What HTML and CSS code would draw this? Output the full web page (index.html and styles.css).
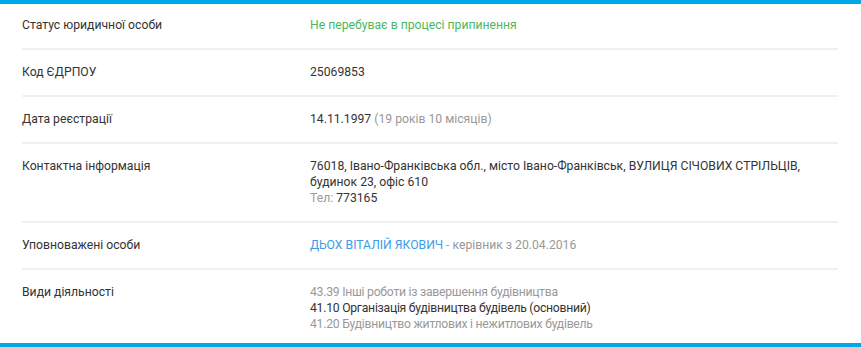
FILE: index.html
```html
<!DOCTYPE html>
<html lang="uk">
<head>
<meta charset="utf-8">
<link rel="stylesheet" href="styles.css">
</head>
<body>
<div class="panel">
  <div class="table">
    <div class="row row-first">
      <div class="label">Статус юридичної особи</div>
      <div class="value status">Не перебуває в процесі припинення</div>
    </div>
    <div class="row">
      <div class="label">Код ЄДРПОУ</div>
      <div class="value">25069853</div>
    </div>
    <div class="row">
      <div class="label">Дата реєстрації</div>
      <div class="value">14.11.1997 <span class="muted">(19 років 10 місяців)</span></div>
    </div>
    <div class="row">
      <div class="label">Контактна інформація</div>
      <div class="value">76018, Івано-Франківська обл., місто Івано-Франківськ, ВУЛИЦЯ СІЧОВИХ СТРІЛЬЦІВ,<br>будинок 23, офіс 610<br><span class="muted">Тел:</span> 773165</div>
    </div>
    <div class="row">
      <div class="label">Уповноважені особи</div>
      <div class="value"><a class="link" href="#">ДЬОХ ВІТАЛІЙ ЯКОВИЧ</a> <span class="muted">- керівник з 20.04.2016</span></div>
    </div>
    <div class="row row-last">
      <div class="label">Види діяльності</div>
      <div class="value activities">
        <div class="muted">43.39 Інші роботи із завершення будівництва</div>
        <div>41.10 Організація будівництва будівель (основний)</div>
        <div class="muted">41.20 Будівництво житлових і нежитлових будівель</div>
      </div>
    </div>
  </div>
</div>
</body>
</html>
```
FILE: styles.css
```css
html, body {
  margin: 0;
  padding: 0;
  background: #fff;
}
.panel {
  width: 861px;
  height: 347px;
  box-sizing: border-box;
  border-top: 4px solid #00a8e8;
  border-bottom: 4px solid #00a8e8;
  font-family: Roboto, "Liberation Sans", Arial, sans-serif;
  font-size: 12.2px;
  line-height: 16px;
  color: #333;
  padding: 0 23px 0 22px;
}
.row {
  display: flex;
  padding: 14px 0 15px;
  border-bottom: 2px solid #f0f0f0;
}
.row-first {
  padding-top: 13px;
}
.row-last {
  border-bottom: none;
}
.label {
  width: 288px;
  flex: none;
}
.value {
  flex: 1;
}
.activities {
  letter-spacing: -0.25px;
}
.status {
  color: #4bb85f;
}
.muted {
  color: #999;
}
.link {
  color: #3d9be9;
  text-decoration: none;
}
```
